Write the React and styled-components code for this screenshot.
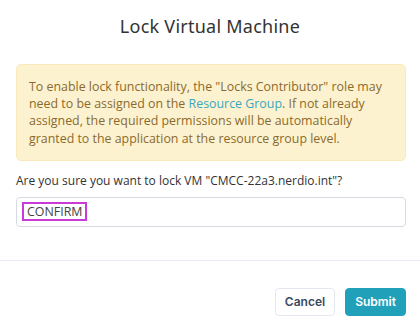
import React from 'react';
import styled, { createGlobalStyle } from 'styled-components';

const GlobalStyle = createGlobalStyle`
	body {
		margin: 0;
		background: #ffffff;
		font-family: 'Open Sans', 'Liberation Sans', sans-serif;
	}
`;

const Modal = styled.div`
	width: 420px;
	height: 328px;
	background: #ffffff;
	display: flex;
	flex-direction: column;
`;

const Title = styled.h2`
	margin: 0;
	padding-top: 14px;
	height: 64px;
	box-sizing: border-box;
	text-align: center;
	font-family: 'Noto Sans', 'Lato', sans-serif;
	font-weight: 400;
	font-size: 18px;
	letter-spacing: 0.25px;
	line-height: 24px;
	color: #333333;
`;

const Body = styled.div`
	padding: 0 14px 0 16px;
	display: flex;
	flex-direction: column;
`;

const Warning = styled.div`
	background: #fdf2d0;
	border: 1px solid #faeabb;
	border-radius: 5px;
	padding: 13px 12px;
	font-size: 12.4px;
	line-height: 17.2px;
	color: #8a6a2c;
`;

const Link = styled.a`
	color: #3aa6bf;
	text-decoration: none;
`;

const Label = styled.p`
	margin: 11px 0 7px;
	font-size: 12px;
	line-height: 18px;
	color: #333333;
`;

const Field = styled.div`
	height: 30px;
	box-sizing: border-box;
	border: 1px solid #d6dae0;
	border-radius: 4px;
	display: flex;
	align-items: center;
	padding: 0 5px;
`;

const Highlight = styled.span`
	border: 2px solid #c93bd6;
	padding: 0 3px;
	font-size: 12.4px;
	line-height: 15px;
	color: #444444;
`;

const Footer = styled.div`
	margin-top: 33px;
	border-top: 1px solid #e8ebf3;
	padding: 27px 14px 0 0;
	display: flex;
	justify-content: flex-end;
	gap: 10px;
`;

const Button = styled.button`
	height: 28px;
	padding: 0 9px;
	border-radius: 4px;
	border: 1px solid ${(p) => (p.primary ? '#20a0b9' : '#e3e8f0')};
	background: ${(p) => (p.primary ? '#20a0b9' : '#ffffff')};
	color: ${(p) => (p.primary ? '#ffffff' : '#3d4a5e')};
	font-family: 'Inter', 'Noto Sans', sans-serif;
	font-weight: 600;
	font-size: 12px;
	cursor: pointer;
`;

const App = () => {
	return (
		<>
			<GlobalStyle />
			<Modal>
				<Title>Lock Virtual Machine</Title>
				<Body>
					<Warning>
						To enable lock functionality, the "Locks Contributor" role may need to be assigned on the{' '}
						<Link href='#'>Resource Group</Link>. If not already assigned, the required permissions will be
						automatically granted to the application at the resource group level.
					</Warning>
					<Label>Are you sure you want to lock VM "CMCC-22a3.nerdio.int"?</Label>
					<Field>
						<Highlight>CONFIRM</Highlight>
					</Field>
				</Body>
				<Footer>
					<Button>Cancel</Button>
					<Button primary>Submit</Button>
				</Footer>
			</Modal>
		</>
	);
};

export default App;
